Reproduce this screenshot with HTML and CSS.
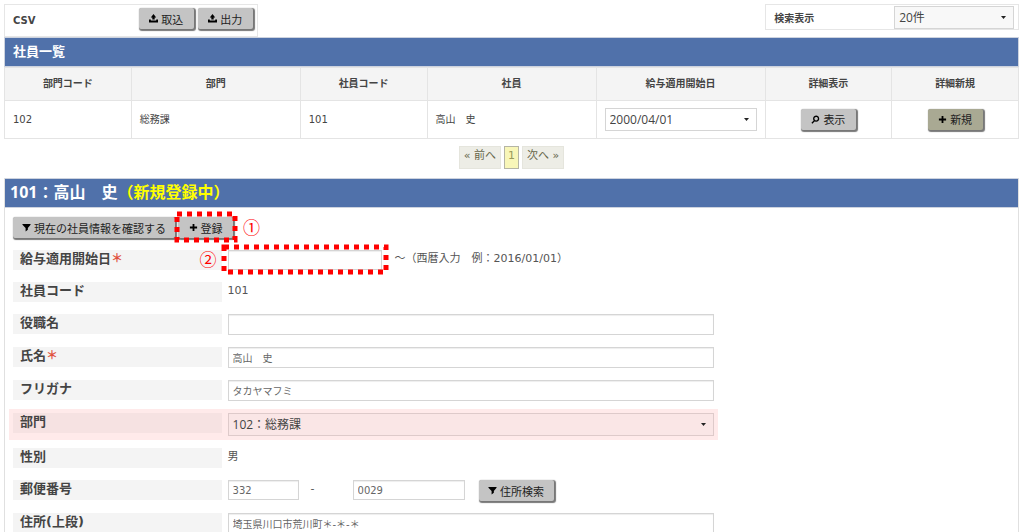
FILE: index.html
```html
<!DOCTYPE html>
<html lang="ja">
<head>
    <meta charset="UTF-8">
    <meta name="viewport" content="width=device-width, initial-scale=1.0">
    <title>社員一覧</title>
    <link rel="stylesheet" href="styles.css">
</head>
<body>
    <!-- アイコン -->
    <svg class="defs" width="0" height="0" aria-hidden="true">
        <symbol id="icon-tray" viewBox="0 0 10 10">
            <path d="M5 0L8 4H6.300V6.200H3.700V4H2zM0 6H2V7.300H8V6H10V9.500H0z"/>
        </symbol>
        <symbol id="icon-search" viewBox="0 0 10 10">
            <path d="M4 6.200A2.700 2.700 0 1 1 5.500 6.800L4 6.200L1 9.200" fill="none" stroke="currentColor" stroke-width="1.500"/>
        </symbol>
        <symbol id="icon-plus" viewBox="0 0 10 10">
            <path d="M4 1H6V4H9V6H6V9H4V6H1V4H4z"/>
        </symbol>
        <symbol id="icon-filter" viewBox="0 0 10 10">
            <path d="M0.500 1H9.500V2L6.500 5.500V7.500L4 9.500V5.500L0.500 2z"/>
        </symbol>
    </svg>

    <div class="container">
        <div class="toolbar">
            <div class="csv-box">
                <span class="tool-label">CSV</span>
                <div class="csv-buttons">
                    <button type="button" class="btn"><svg class="icon"><use href="#icon-tray"/></svg>取込</button>
                    <button type="button" class="btn"><svg class="icon"><use href="#icon-tray"/></svg>出力</button>
                </div>
            </div>
            <div class="search-box">
                <label class="tool-label" for="perPage">検索表示</label>
                <select id="perPage" class="select per-page">
                    <option>20件</option>
                </select>
            </div>
        </div>

        <h2 class="list-title">社員一覧</h2>
        <table class="list">
            <thead>
                <tr>
                    <th class="narrow">部門コード</th>
                    <th class="wide">部門</th>
                    <th class="narrow">社員コード</th>
                    <th class="wide">社員</th>
                    <th class="wide">給与適用開始日</th>
                    <th class="narrow">詳細表示</th>
                    <th class="narrow">詳細新規</th>
                </tr>
            </thead>
            <tbody>
                <tr>
                    <td>102</td>
                    <td>総務課</td>
                    <td>101</td>
                    <td>高山　史</td>
                    <td>
                        <select class="select" aria-label="給与適用開始日">
                            <option>2000/04/01</option>
                        </select>
                    </td>
                    <td class="center"><button type="button" class="btn"><svg class="icon"><use href="#icon-search"/></svg>表示</button></td>
                    <td class="center"><button type="button" class="btn btn-new"><svg class="icon"><use href="#icon-plus"/></svg>新規</button></td>
                </tr>
            </tbody>
        </table>

        <nav class="pager">
            <a href="#">« 前へ</a>
            <a href="#" class="current">1</a>
            <a href="#">次へ »</a>
        </nav>

        <form class="detail">
            <h2 class="detail-title">101：高山　史<span class="status">（新規登録中）</span></h2>
            <div class="actions">
                <button type="button" class="btn btn-confirm"><svg class="icon"><use href="#icon-filter"/></svg>現在の社員情報を確認する</button>
                <div class="marked">
                    <button type="submit" class="btn"><svg class="icon"><use href="#icon-plus"/></svg>登録</button>
                    <svg class="mark"><rect width="100%" height="100%"/></svg>
                    <span class="mark-no after">①</span>
                </div>
            </div>

            <div class="row">
                <label for="startDate">給与適用開始日<span class="required">＊</span></label>
                <div class="field">
                    <div class="marked date">
                        <input type="text" id="startDate" name="startDate">
                        <svg class="mark"><rect width="100%" height="100%"/></svg>
                        <span class="mark-no before">②</span>
                    </div>
                    <span class="note">～（西暦入力　例：2016/01/01）</span>
                </div>
            </div>
            <div class="row">
                <span class="name">社員コード</span>
                <div class="field">101</div>
            </div>
            <div class="row">
                <label for="position">役職名</label>
                <div class="field"><input type="text" id="position" class="tall" name="position"></div>
            </div>
            <div class="row">
                <label for="fullName">氏名<span class="required">＊</span></label>
                <div class="field"><input type="text" id="fullName" class="tall" name="fullName" value="高山　史"></div>
            </div>
            <div class="row">
                <label for="kana">フリガナ</label>
                <div class="field"><input type="text" id="kana" class="tall" name="kana" value="タカヤマフミ"></div>
            </div>
            <div class="row highlight">
                <label for="department">部門</label>
                <div class="field">
                    <select id="department" class="select" name="department">
                        <option>102：総務課</option>
                    </select>
                </div>
            </div>
            <div class="row">
                <span class="name">性別</span>
                <div class="field">男</div>
            </div>
            <div class="row">
                <label for="zip1">郵便番号</label>
                <div class="field">
                    <input type="text" id="zip1" class="zip1" name="zip1" value="332">
                    <span class="hyphen">-</span>
                    <input type="text" class="zip2" name="zip2" value="0029" aria-label="郵便番号（下4桁）">
                    <button type="button" class="btn btn-zip"><svg class="icon"><use href="#icon-filter"/></svg>住所検索</button>
                </div>
            </div>
            <div class="row">
                <label for="address1">住所(上段)</label>
                <div class="field"><input type="text" id="address1" class="tall" name="address1" value="埼玉県川口市荒川町＊-＊-＊"></div>
            </div>
        </form>
    </div>
</body>
</html>
```

FILE: styles.css
```css
* {
    box-sizing: border-box;
}

html {
    overflow: hidden;
}

body {
    margin: 0;
    padding: 4px 5px 0 4px;
    font-family: "DejaVu Sans", "Noto Sans CJK JP", sans-serif;
    font-size: 11px;
    line-height: 20px;
    color: #555;
    background-color: #fff;
}

button, input, select {
    font-family: inherit;
    font-size: 11px;
    margin: 0;
}

.defs {
    position: absolute;
}

h2 {
    margin: 0;
    font-family: "Open Sans", "Noto Sans CJK JP", sans-serif;
    color: #fff;
    background-color: #5071aa;
    border: 1px solid #cdd3df;
}

/* 上部ツールバー */
.toolbar {
    display: flex;
    justify-content: space-between;
    align-items: flex-start;
}

.csv-box, .search-box {
    display: flex;
    align-items: center;
    justify-content: space-between;
    width: 25%;
    border: 1px solid #e6e6e6;
}

.csv-box {
    height: 33px;
    padding: 0 4px 4px 8px;
}

.search-box {
    height: 26px;
    padding: 0 4px 0 8px;
}

.tool-label {
    padding-top: 4px;
    font-size: 10px;
    font-weight: bold;
    color: #444;
}

.csv-buttons {
    display: flex;
    gap: 4px;
}

.btn {
    display: inline-flex;
    align-items: center;
    justify-content: center;
    gap: 3px;
    min-width: 55px;
    height: 21px;
    padding: 0 8px;
    color: #222;
    background-color: #c4c4c4;
    border: 0;
    border-radius: 2px;
    box-shadow: 1px 1px 1px 1px #777;
    white-space: nowrap;
    cursor: pointer;
}

.btn-new {
    background-color: #a9a993;
}

.icon {
    width: 9px;
    height: 9px;
    color: #000;
    fill: currentColor;
}

.select {
    width: 100%;
    height: 23px;
    padding: 0 20px 0 4px;
    font-family: "Open Sans", "Noto Sans CJK JP", sans-serif;
    font-size: 12px;
    color: #444;
    appearance: none;
    background: #fff url("data:image/svg+xml,%3Csvg xmlns='http://www.w3.org/2000/svg' width='5' height='3'%3E%3Cpath d='M0 0h5L2.500 3z' fill='%23222'/%3E%3C/svg%3E") no-repeat right 7px center;
    border: 1px solid #d5d5d5;
    border-radius: 0;
}

.per-page {
    width: 50%;
    background-color: #f8f8f8;
}

/* 社員一覧 */
.list-title {
    height: 30px;
    padding-left: 8px;
    font-size: 13px;
    line-height: 26px;
}

.list {
    width: 100%;
    border-collapse: collapse;
    table-layout: fixed;
}

.list th, .list td {
    border: 1px solid #e4e4e4;
    padding: 0 8px;
}

.list th {
    height: 33px;
    font-size: 10px;
    font-weight: 600;
    color: #444;
    background-color: #f4f4f4;
}

.list td {
    height: 38px;
    font-size: 10px;
    color: #444;
}

.narrow {
    width: 12.5%;
}

.list .center {
    text-align: center;
}

.pager {
    display: flex;
    justify-content: center;
    gap: 3px;
    padding: 7px 0 9px;
}

.pager a {
    height: 23px;
    padding: 0 4px;
    line-height: 18px;
    color: #66664a;
    background-color: #edede6;
    border: 1px solid #e5e5dd;
    text-decoration: none;
}

.pager .current {
    padding: 0 3px;
    color: #99995a;
    background-color: #f8f6b8;
    border-color: #b5b5a5;
}

/* 社員詳細 */
.detail {
    border: 1px solid #e0e0e0;
    border-top: 0;
}

.detail-title {
    height: 30px;
    padding-left: 5px;
    font-size: 16px;
    line-height: 26px;
    border-left: 0;
    border-right: 0;
}

.status {
    color: #ff0;
}

.actions {
    display: flex;
    gap: 3px;
    padding: 9px 8px 12px;
}

.btn-confirm {
    min-width: 162px;
}

.row {
    display: grid;
    grid-template-columns: 3fr 7fr;
    gap: 6px;
    align-items: start;
    width: 70%;
    margin: 0 0 12px 4px;
    padding: 0 4px;
}

.row label, .row .name {
    height: 20px;
    padding-left: 7px;
    font-size: 13px;
    font-weight: bold;
    line-height: 18px;
    color: #444;
    background-color: #f4f4f4;
}

.required {
    font-size: 12px;
    color: #e0523f;
}

.field {
    display: flex;
    min-height: 20px;
    line-height: 18px;
}

.field input {
    width: 100%;
    height: 20px;
    padding: 0 4px;
    font-size: 10px;
    color: #666;
    background-color: #fff;
    border: 1px solid #d5d5d5;
    box-shadow: inset 0 1px 1px #eee;
}

.field .tall {
    height: 21px;
}

.highlight {
    margin-top: -4px;
    margin-bottom: 8px;
    padding: 4px;
    background-color: #ffeaea;
}

.highlight label {
    background-color: #f6e2e2;
}

.highlight .select {
    background-color: #fae6e6;
    border-color: #decaca;
}

.note {
    padding-left: 13px;
    white-space: nowrap;
}

.hyphen {
    width: 54px;
    padding-left: 12px;
}

.field .zip1 {
    width: 71px;
}

.field .zip2 {
    width: 112px;
    margin-right: 14px;
}

.btn-zip {
    min-width: 75px;
}

/* 赤い点線の枠と番号 */
.marked {
    position: relative;
    display: flex;
}

.date {
    width: 154px;
}

.mark {
    position: absolute;
    top: -3px;
    left: -1px;
    width: calc(100% + 3px);
    height: calc(100% + 5px);
    overflow: visible;
    pointer-events: none;
}

.mark rect {
    fill: none;
    stroke: #f00;
    stroke-width: 5;
    stroke-dasharray: 5;
}

.date .mark {
    left: -4px;
    width: calc(100% + 8px);
}

.mark-no {
    position: absolute;
    top: 0;
    font-family: "Noto Sans CJK JP", sans-serif;
    font-size: 17px;
    color: #f00;
}

.after {
    left: calc(100% + 10px);
}

.before {
    right: calc(100% + 11px);
}
```
